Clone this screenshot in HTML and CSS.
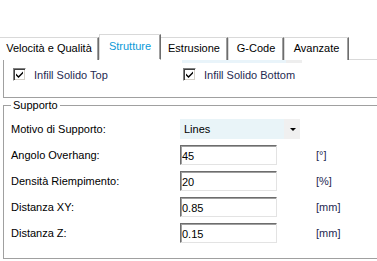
FILE: index.html
```html
<!DOCTYPE html>
<html lang="it">
<head>
    <meta charset="UTF-8">
    <meta name="viewport" content="width=device-width, initial-scale=1.0">
    <title>Strutture</title>
    <link rel="stylesheet" href="styles.css">
</head>
<body>
    <div class="window">
        <div class="tabs">
            <div class="tab tab-velocita">Velocità e Qualità</div>
            <div class="tab tab-strutture active">Strutture</div>
            <div class="tab tab-estrusione">Estrusione</div>
            <div class="tab tab-gcode">G-Code</div>
            <div class="tab tab-avanzate">Avanzate</div>
        </div>

        <div class="panel">
            <div class="strip"><span class="strip-blue"></span><span class="strip-gray"></span></div>

            <div class="group-infill">
                <label class="check check-top">
                    <span class="box"><svg width="9" height="9" viewBox="0 0 9 9"><path d="M1 3.5 L3.5 6 L8 1.5 L8 3.5 L3.5 8 L1 5.5 Z" fill="#000"/></svg></span>
                    Infill Solido Top
                </label>
                <label class="check check-bottom">
                    <span class="box"><svg width="9" height="9" viewBox="0 0 9 9"><path d="M1 3.5 L3.5 6 L8 1.5 L8 3.5 L3.5 8 L1 5.5 Z" fill="#000"/></svg></span>
                    Infill Solido Bottom
                </label>
            </div>

            <fieldset class="group-support">
                <legend>Supporto</legend>
                <div class="form">
                    <span class="label">Motivo di Supporto:</span>
                    <div class="combo">
                        <span class="combo-value">Lines</span>
                        <span class="combo-arrow"></span>
                    </div>
                    <span class="unit"></span>

                    <span class="label">Angolo Overhang:</span>
                    <input type="text" class="field" value="45">
                    <span class="unit">[°]</span>

                    <span class="label">Densità Riempimento:</span>
                    <input type="text" class="field" value="20">
                    <span class="unit">[%]</span>

                    <span class="label">Distanza XY:</span>
                    <input type="text" class="field" value="0.85">
                    <span class="unit">[mm]</span>

                    <span class="label">Distanza Z:</span>
                    <input type="text" class="field" value="0.15">
                    <span class="unit">[mm]</span>
                </div>
            </fieldset>
        </div>
    </div>
</body>
</html>
```

FILE: styles.css
```css
body {
    margin: 0;
    padding: 0;
    background-color: #ffffff;
    font-family: 'Liberation Sans', Arial, sans-serif;
    font-size: 11px;
    color: #000;
    overflow: hidden;
}
.window {
    width: 520px;
    padding-top: 34px;
}
.tabs {
    display: flex;
    align-items: flex-end;
    height: 25px;
    border-bottom: 1px solid #d9d9d9;
}
.tab {
    box-sizing: border-box;
    height: 23px;
    line-height: 20px;
    text-align: center;
    background-color: #ffffff;
    border-top: 1px solid #d9d9d9;
    border-left: 1px solid #d9d9d9;
    border-right: 1px solid #6d6d6d;
    box-shadow: inset -1px 0 #a0a0a0;
    margin-bottom: -1px;
}
.tab-velocita { width: 99px; border-left: none; }
.tab-strutture { width: 62px; }
.tab-estrusione { width: 67px; border-left: none; }
.tab-gcode { width: 56px; }
.tab-avanzate { width: 65px; }
.tab.active {
    height: 26px;
    line-height: 22px;
    color: #0a9ad8;
    border-bottom: 1px solid #ffffff;
    border-left: 1px solid #d9d9d9;
}
.panel {
    position: relative;
    padding-left: 3px;
}
.strip {
    position: absolute;
    top: 0;
    left: 182px;
    display: flex;
    height: 3px;
}
.strip-blue {
    width: 104px;
    background-color: #e9f4fa;
}
.strip-gray {
    width: 16px;
    background-color: #eeeeee;
}
.group-infill {
    display: flex;
    height: 38px;
    border-left: 1px solid #a0a0a0;
    border-bottom: 1px solid #a0a0a0;
    padding-left: 9px;
    padding-top: 8px;
    box-sizing: border-box;
}
.check {
    display: flex;
    align-items: center;
    height: 13px;
    color: #1f2a52;
}
.check-top { width: 170px; }
.box {
    box-sizing: border-box;
    width: 13px;
    height: 13px;
    margin-right: 8px;
    background-color: #fff;
    border: 1px solid;
    border-color: #808080 #ffffff #ffffff #808080;
    box-shadow: inset 1px 1px #404040, inset -1px -1px #d4d0c8;
    display: flex;
    align-items: center;
    justify-content: center;
}
.group-support {
    margin: 1px 0 0 0;
    padding: 7px 0 15px 7px;
    border: none;
    border-top: 1px solid #a0a0a0;
    border-left: 1px solid #a0a0a0;
    border-bottom: 1px solid #a0a0a0;
}
.group-support legend {
    padding: 0 2px;
    line-height: 13px;
}
.form {
    display: grid;
    grid-template-columns: 169px 136px 60px;
    grid-auto-rows: 20px;
    row-gap: 6px;
    align-items: center;
}
.combo {
    display: flex;
    width: 120px;
    height: 20px;
}
.combo-value {
    flex: 1;
    background-color: #e9f4f8;
    line-height: 20px;
    padding-left: 4px;
}
.combo-arrow {
    width: 16px;
    background-color: #f0f0f0;
    position: relative;
}
.combo-arrow::after {
    content: '';
    position: absolute;
    left: 6px;
    top: 9px;
    border-left: 3px solid transparent;
    border-right: 3px solid transparent;
    border-top: 3px solid #000;
}
.field {
    box-sizing: border-box;
    width: 97px;
    height: 20px;
    margin: 0;
    padding: 1px 1px 0 1px;
    font-family: 'Liberation Sans', Arial, sans-serif;
    font-size: 11px;
    color: #000;
    border: 1px solid;
    border-color: #6d6d6d #e3e3e3 #e3e3e3 #6d6d6d;
    box-shadow: inset 1px 1px #a0a0a0;
    outline: none;
}
.unit {
    color: #1f2a52;
}
```
